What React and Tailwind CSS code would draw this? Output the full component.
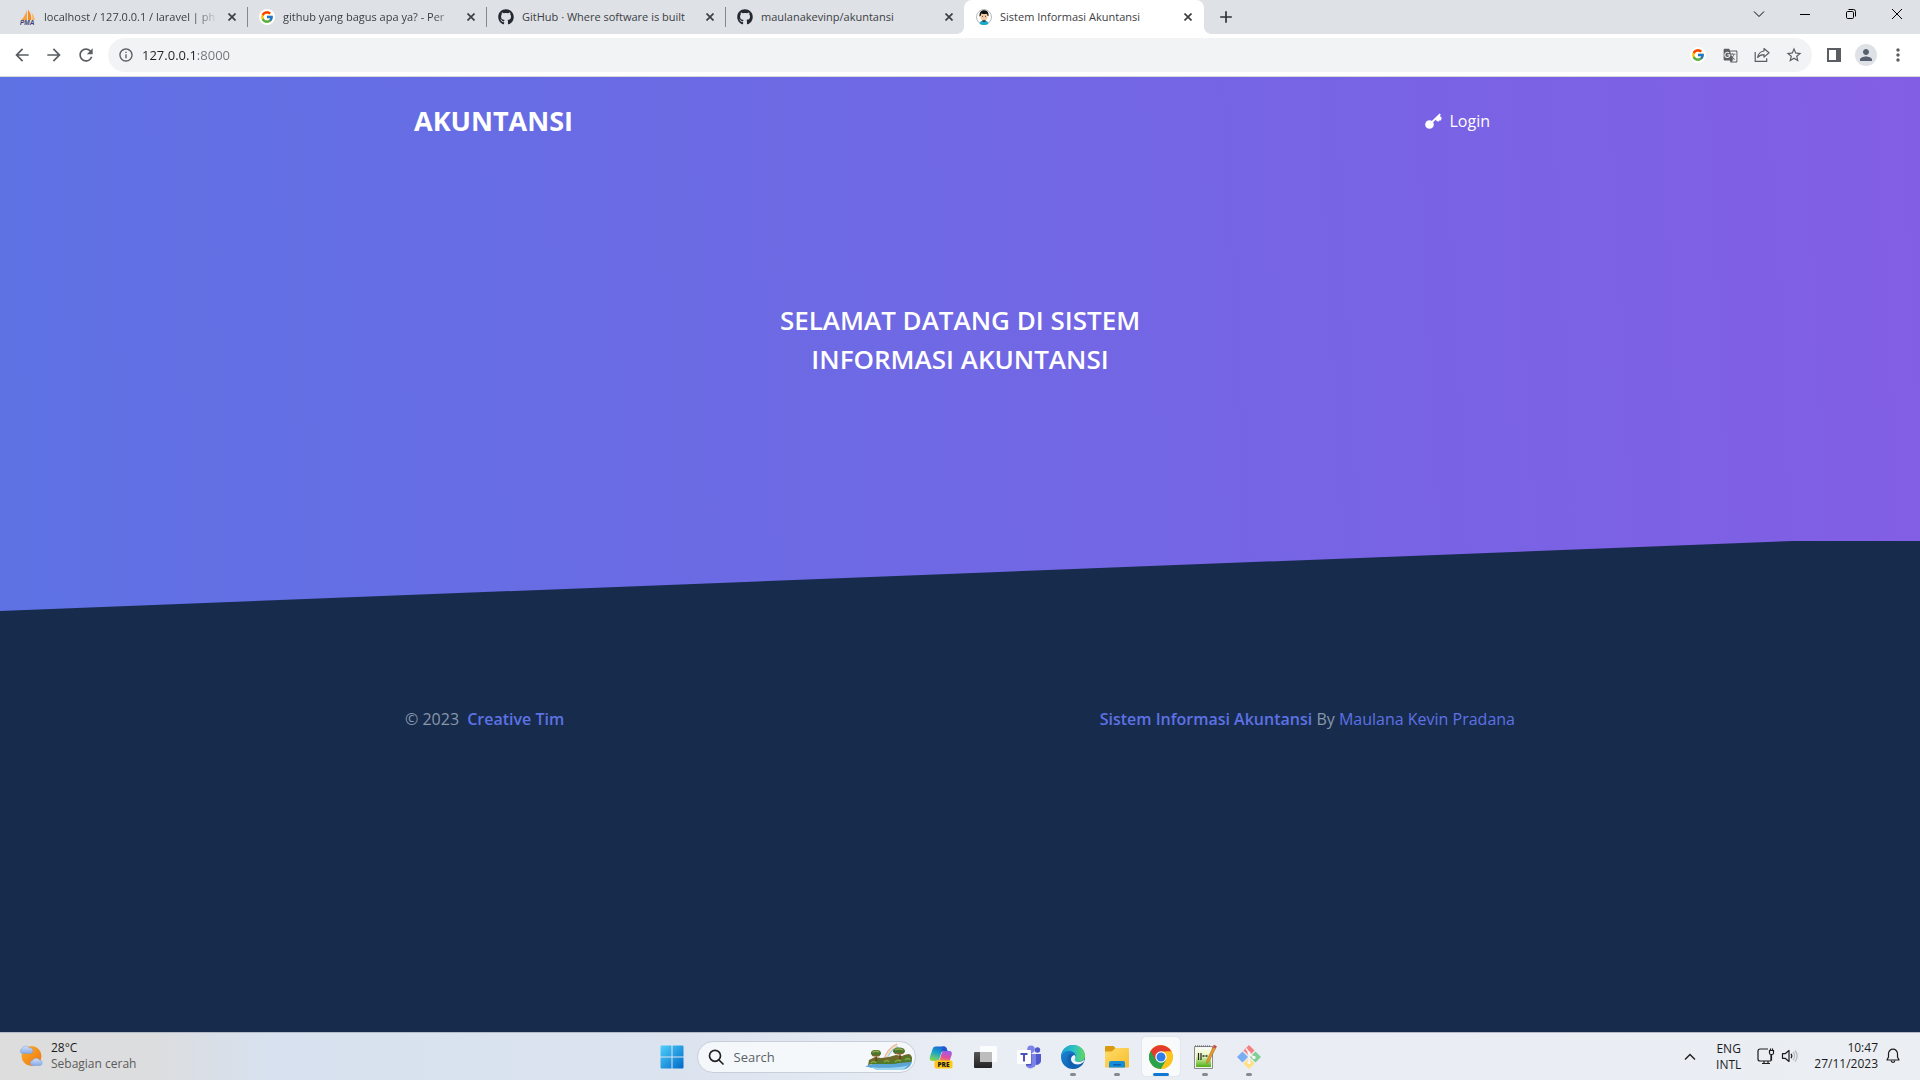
import React from "react";
import { FcGoogle } from "react-icons/fc";
import { FaGithub } from "react-icons/fa";
import {
  MdArrowBack,
  MdArrowForward,
  MdRefresh,
  MdInfoOutline,
  MdStarBorder,
  MdMoreVert,
  MdPerson,
  MdGTranslate,
  MdAdd,
} from "react-icons/md";

/* ---------- favicons ---------- */

function PmaIcon() {
  return (
    <svg viewBox="0 0 16 16" className="size-4">
      <path d="M7 1v10H1.2C3.8 8.500 5.800 5 7 1z" fill="#f7a13a" />
      <path d="M8 .5c2.600 3 3.400 7 3.200 10.500H8z" fill="#f58a1f" />
      <path d="M11.500 3.500c1.900 2.200 3 4.700 3.300 7.500h-2.600c.2-2.600 0-5-.7-7.500z" fill="#f9b562" />
      <text x="0" y="15.500" fontSize="6.500" fontWeight="900" fontStyle="italic" fill="#3d4173" fontFamily="Liberation Sans, sans-serif">PMA</text>
    </svg>
  );
}

function GoogleBadge() {
  return (
    <span className="flex size-4 items-center justify-center rounded-full bg-white">
      <FcGoogle className="size-[14px]" />
    </span>
  );
}

function PersonFavicon() {
  return (
    <svg viewBox="0 0 16 16" className="size-4">
      <circle cx="8" cy="8" r="7.500" fill="#fff" stroke="#a7a7a7" strokeWidth=".8" />
      <path d="M3.600 15c.2-2.400 1.800-3.500 4.400-3.500s4.200 1.100 4.400 3.500c-2.600 1.300-6.200 1.300-8.800 0z" fill="#1aa7c8" />
      <path d="M6.400 10.500h3.200v1.800L8 13l-1.600-.7z" fill="#1d2a33" />
      <path d="M4.500 5h7v3.200A3.200 3.200 0 0 1 8 11.300a3.200 3.200 0 0 1-3.500-3.100z" fill="#f3c9a0" />
      <path d="M3.500 7.500C3.200 3.500 4.800 1.200 8 1.200s5 2.100 4.500 6.100l-1-.6-.5-1.900c-2 .5-4.200.4-5.700-.4l-.8 2.500z" fill="#101010" />
      <circle cx="6.500" cy="7.300" r=".5" fill="#222" />
      <circle cx="9.500" cy="7.300" r=".5" fill="#222" />
    </svg>
  );
}

/* ---------- browser chrome ---------- */

function Github() {
  return <FaGithub className="size-4 text-[#24292f]" />;
}

const tabs = [
  { title: "localhost / 127.0.0.1 / laravel | ph", Icon: PmaIcon, line: true, fade: true },
  { title: "github yang bagus apa ya? - Per", Icon: GoogleBadge, line: true, fade: true },
  { title: "GitHub · Where software is built", Icon: Github, line: true },
  { title: "maulanakevinp/akuntansi", Icon: Github },
  { title: "Sistem Informasi Akuntansi", Icon: PersonFavicon, active: true },
];

function Tab({ title, Icon, line, active, fade }) {
  return (
    <div className={active ? "relative flex w-60 items-center rounded-t-lg bg-white pr-2 pl-3" : "relative flex w-[239px] items-center pr-[7px] pl-3"}>
      {active && (
        <>
          <span className="absolute bottom-0 -left-2 size-2 bg-[radial-gradient(circle_at_0_0,#dee1e6_8px,#fff_8px)]" />
          <span className="absolute -right-2 bottom-0 size-2 bg-[radial-gradient(circle_at_100%_0,#dee1e6_8px,#fff_8px)]" />
        </>
      )}
      <button role="tab" aria-selected={!!active} className="flex min-w-0 flex-1 items-center gap-2 text-left">
        <span className="shrink-0"><Icon /></span>
        <span className={fade ? "[mask-image:linear-gradient(90deg,#000_150px,transparent_174px)] text-[11px] leading-5 whitespace-nowrap text-[#3c4043]" : "text-[11px] leading-5 whitespace-nowrap text-[#3c4043]"}>{title}</span>
      </button>
      <button aria-label="Close tab" className="flex size-4 shrink-0 items-center justify-center text-[#3c4043]">
        <svg viewBox="0 0 8 8" className="size-2" stroke="currentColor" strokeWidth="1.700"><path d="M.5.5l7 7M7.500.5l-7 7" /></svg>
      </button>
      {line && <span className="absolute top-[7px] -right-px h-5 w-px bg-[#85888c]" />}
    </div>
  );
}

function TabStrip() {
  return (
    <header className="flex h-[34px] bg-[#dee1e6] pl-2">
      <div role="tablist" className="flex">
        {tabs.map((t) => <Tab key={t.title} {...t} />)}
      </div>
      <button aria-label="New tab" className="ml-3 flex w-5 items-center justify-center text-[#2f3235]">
        <MdAdd className="size-5" />
      </button>
      <div className="ml-auto flex h-7 text-black">
        <button aria-label="Search tabs" className="flex w-[46px] items-center justify-center">
          <svg viewBox="0 0 12 12" className="size-3" fill="none" stroke="currentColor"><path d="M1 3.500l5 5 5-5" /></svg>
        </button>
        <button aria-label="Minimize" className="flex w-[46px] items-center justify-center">
          <svg viewBox="0 0 10 10" className="size-[10px]" stroke="currentColor"><path d="M0 5.500h10" /></svg>
        </button>
        <button aria-label="Restore" className="flex w-[46px] items-center justify-center">
          <svg viewBox="0 0 10 10" className="size-[10px]" fill="none" stroke="currentColor">
            <rect x=".5" y="2.500" width="7" height="7" rx="1.200" />
            <path d="M2.500.5h5a2 2 0 0 1 2 2v5" />
          </svg>
        </button>
        <button aria-label="Close" className="flex w-[46px] items-center justify-center">
          <svg viewBox="0 0 10 10" className="size-[10px]" stroke="currentColor"><path d="M0 0l10 10M10 0L0 10" /></svg>
        </button>
      </div>
    </header>
  );
}

function ToolButton({ label, children }) {
  return <button aria-label={label} className="flex size-8 items-center justify-center">{children}</button>;
}

function Toolbar() {
  return (
    <div className="flex h-[43px] items-center border-b border-[#d5d7da] bg-white px-[6px] text-[#5a5d61]">
      <ToolButton label="Back"><MdArrowBack className="size-5" /></ToolButton>
      <ToolButton label="Forward"><MdArrowForward className="size-5" /></ToolButton>
      <ToolButton label="Reload"><MdRefresh className="size-5" /></ToolButton>
      <div className="ml-[6px] flex h-[34px] flex-1 items-center rounded-full bg-[#f1f3f4] pr-[2px] pl-[10px]">
        <MdInfoOutline className="size-4" />
        <input
          aria-label="Address"
          defaultValue="127.0.0.1:8000"
          className="ml-2 min-w-0 flex-1 bg-[linear-gradient(90deg,#202124_53px,#6f7478_53px)] bg-clip-text text-[13px] leading-5 text-transparent outline-none"
        />
        <ToolButton label="Search with Google">
          <span className="flex size-4 items-center justify-center rounded-full bg-white"><FcGoogle className="size-[14px]" /></span>
        </ToolButton>
        <ToolButton label="Translate"><MdGTranslate className="size-[15px]" /></ToolButton>
        <ToolButton label="Share">
          <svg viewBox="0 0 16 16" className="size-4" fill="none" stroke="currentColor" strokeWidth="1.200">
            <path d="M1.200 5v9.300h11.500v-3" />
            <path d="M10 1.500l5 4.300-5 4.300V7.700c-3 0-4.800.9-6.300 2.800.5-3.500 2.500-6 6.300-6.500z" strokeLinejoin="round" />
          </svg>
        </ToolButton>
        <ToolButton label="Bookmark"><MdStarBorder className="size-[18px]" /></ToolButton>
      </div>
      <div className="ml-[6px] flex">
        <ToolButton label="Side panel">
          <svg viewBox="0 0 14 14" className="size-[14px]"><path d="M0 0h14v14H0zM2 2v10h7V2z" fill="currentColor" fillRule="evenodd" /></svg>
        </ToolButton>
        <ToolButton label="Profile">
          <span className="flex size-[22px] items-center justify-center rounded-full bg-[#dee1e6] text-[#56606f]"><MdPerson className="size-[18px]" /></span>
        </ToolButton>
        <ToolButton label="Menu"><MdMoreVert className="size-5" /></ToolButton>
      </div>
    </div>
  );
}

/* ---------- web page ---------- */

function KeyIcon() {
  return (
    <svg viewBox="0 0 17 16" className="h-4 w-[17px]" fill="currentColor">
      <circle cx="4.500" cy="11.500" r="4.300" />
      <path d="M6 8.800L14.600.6l1.300 1.200-1 1 1.900 2.200-1 2.600-1.500-.2-.3 1-2-.2-1.300-1.500-3.500 3.600z" />
    </svg>
  );
}

function WebPage() {
  return (
    <main className="flex-1 bg-[#172b4d]">
      <section className="bg-[linear-gradient(87deg,#5e72e4_0%,#825ee4_100%)] text-white">
        <nav className="mx-auto flex h-[88px] max-w-[1140px] items-center justify-between pr-10 pl-6">
          <a href="#home" className="text-[27px] leading-10 font-bold">AKUNTANSI</a>
          <a href="#login" className="flex items-center gap-[7px] text-[16px] leading-6">
            <KeyIcon />
            Login
          </a>
        </nav>
        <h1 className="mx-auto max-w-[440px] pt-[136px] pb-[162px] text-center text-[26px] leading-[39px] font-semibold">
          SELAMAT DATANG DI SISTEM INFORMASI AKUNTANSI
        </h1>
        <svg viewBox="0 0 1920 70" preserveAspectRatio="none" className="block h-[70px] w-full">
          <path d="M0 70L1793 0H1920V70z" fill="#172b4d" />
        </svg>
      </section>
      <footer className="mx-auto flex max-w-[1140px] justify-between px-[15px] pt-24 text-[16px] leading-6 text-[#8898aa]">
        <p>© 2023 <a href="#creative" className="ml-1 font-semibold text-[#5e72e4]">Creative Tim</a></p>
        <p>
          <a href="#app" className="font-semibold text-[#5e72e4]">Sistem Informasi Akuntansi</a> By{" "}
          <a href="#author" className="text-[#5e72e4]">Maulana Kevin Pradana</a>
        </p>
      </footer>
    </main>
  );
}

/* ---------- taskbar ---------- */

function WeatherIcon() {
  return (
    <svg viewBox="0 0 24 24" className="size-6">
      <defs>
        <linearGradient id="sun" x1="0" y1="0" x2="1" y2="1"><stop offset="0" stopColor="#f8b32c" /><stop offset="1" stopColor="#f0700f" /></linearGradient>
        <linearGradient id="cloud" x1="0" y1="0" x2="0" y2="1"><stop offset="0" stopColor="#d3e2fa" /><stop offset="1" stopColor="#86a9e6" /></linearGradient>
      </defs>
      <circle cx="12.500" cy="12" r="10" fill="url(#sun)" />
      <path d="M2.800 9.500A2.500 2.500 0 0 1 3 4.800 4 4 0 0 1 10.300 4a2.800 2.800 0 0 1 1.500 5.500z" fill="url(#cloud)" stroke="#7d9edb" strokeWidth=".5" />
      <path d="M13 21.500a2.600 2.600 0 0 1 .4-5 4.300 4.300 0 0 1 7.300-.5 2.800 2.800 0 0 1 .4 5.500z" fill="url(#cloud)" stroke="#7d9edb" strokeWidth=".5" />
    </svg>
  );
}

function WindowsIcon() {
  return (
    <svg viewBox="0 0 24 24" className="size-6">
      <defs><linearGradient id="win" x1="0" y1="0" x2="1" y2="1"><stop offset="0" stopColor="#4fd0fb" /><stop offset="1" stopColor="#0069c8" /></linearGradient></defs>
      <path d="M1.500.5h10v11H.5v-10a1 1 0 0 1 1-1zM12.500.5h10a1 1 0 0 1 1 1v10h-11zM.5 12.500h11v11h-10a1 1 0 0 1-1-1zM12.500 12.500h11v10a1 1 0 0 1-1 1h-10z" fill="url(#win)" />
    </svg>
  );
}

function IslandArt() {
  return (
    <svg viewBox="0 0 50 28" className="h-7 w-[50px]">
      <path d="M20 17C22 9 26 4 33 1" fill="none" stroke="#f3a3a0" strokeWidth="1.200" />
      <path d="M21.200 17.500C23 10 27 5 33.500 2.300" fill="none" stroke="#f6e08a" strokeWidth="1.200" />
      <path d="M22.400 18C24 11 28 6.500 34 3.600" fill="none" stroke="#9dc9f2" strokeWidth="1.200" />
      <path d="M1 23.500c8-4 18-4 26-5s18-2 21-1c0 4-3 8-8 9H12c-3-2-7-2-11-3z" fill="#5aa6d6" />
      <path d="M7 24c8 1.500 27 1 37-1.500L39 27H13z" fill="#9ad4ee" />
      <path d="M4 22.500c5-3 10-3 14-3l11 1 18-1.500c2-3 1-7-2-8-3 0-5 1-7 2l-6-1-7 2-8 1-6-1-6 3z" fill="#6d6a2a" />
      <path d="M5 21c1-3 4-4 7-3 2-2 5-1 6 1 3-2 7-2 9 0 2-3 6-3 8-1 3-3 6-6 10-5 3 1 3 4 2 6-7-1-12 2-19 2s-15 0-23 0z" fill="#4f7a2c" />
      <path d="M7 20c2-2 4-2 5 0M20 19c2-2 4-2 5 0M31 19c2-2 4-2 6-1M41 17c2-2 4-2 5 0" stroke="#8aa53c" strokeWidth="1.500" fill="none" />
      <path d="M11 18l1.300-7 1 7zM35 16l.8-8 1.600 8z" fill="#70401e" />
      <path d="M12 7c4 0 5 1.500 5 3.500s-2 2.500-5 2.500-5-.5-5-2.500S8 7 12 7zM35 4.500c4 0 6 1.700 6 3.700S38 11 35 11s-6-.7-6-2.700 2-3.800 6-3.800z" fill="#4d742d" />
      <path d="M8.500 9.500c2-1.500 4.500-1.500 6.500-.5M31 7c2-1.500 6-1.500 8 0" stroke="#91a844" strokeWidth="1.500" fill="none" />
      <path d="M8 12.500c2 .8 6 .8 8 0M30.500 10.300c3 1 6 1 9 0" stroke="#9a5a24" fill="none" />
    </svg>
  );
}

function CopilotIcon() {
  return (
    <svg viewBox="0 0 24 24" className="size-6">
      <defs>
        <linearGradient id="cpa" x1="0.600" y1="0" x2="0.200" y2="1"><stop offset="0" stopColor="#1566d6" /><stop offset=".45" stopColor="#19a5c4" /><stop offset="1" stopColor="#8fd84a" /></linearGradient>
        <linearGradient id="cpb" x1="0.700" y1="0" x2="0.300" y2="1"><stop offset="0" stopColor="#9a5cf0" /><stop offset=".6" stopColor="#e0509a" /><stop offset="1" stopColor="#f58a4e" /></linearGradient>
      </defs>
      <path d="M7 1.500h8c1.600 0 2.400 1 2.800 2.400L18.500 6H15c-1.600 0-2.400.8-2.900 2.400l-1.700 5.400c-.5 1.500-1.400 2.200-3 2.200H3.200C1 16 .2 14.300.8 12.300L3.600 4C4.100 2.300 5.200 1.500 7 1.500z" fill="url(#cpa)" />
      <path d="M15 6h5.300c2.200 0 3 1.700 2.400 3.700L20.500 16h-12l2.300-1.500 1.800-6.100C13 6.900 13.600 6 15 6z" fill="url(#cpb)" />
      <path d="M13.200 1.500H15c1.600 0 2.400 1 2.800 2.400L18.500 6H15c-1.200 0-1.900.5-2.400 1.300z" fill="#2457cf" />
      <rect x="5.500" y="15.500" width="18" height="8" rx="1.800" fill="#ffc817" />
      <text x="14.500" y="21.800" textAnchor="middle" fontSize="6.500" fontWeight="800" fill="#1b1b1b" fontFamily="Open Sans, sans-serif">PRE</text>
    </svg>
  );
}

function TaskViewIcon() {
  return (
    <svg viewBox="0 0 24 24" className="size-6">
      <defs><linearGradient id="tv" x1="0" y1="0" x2="0" y2="1"><stop offset="0" stopColor="#555" /><stop offset="1" stopColor="#222" /></linearGradient></defs>
      <rect x="1" y="7" width="18" height="16" rx="1" fill="url(#tv)" />
      <rect x="7" y="1" width="17" height="16" rx="1" fill="#fff" fillOpacity=".82" />
      <path d="M7 7h12v10H7z" fill="#bdbdbd" />
    </svg>
  );
}

function TeamsIcon() {
  return (
    <svg viewBox="0 0 24 24" className="size-6">
      <circle cx="20.500" cy="5" r="2.700" fill="#5059c9" />
      <path d="M17 9h7v7a4 4 0 0 1-7 2.500z" fill="#5059c9" />
      <circle cx="14" cy="4.300" r="3.800" fill="#7b83eb" />
      <path d="M9 9h10v9a5.500 5.500 0 0 1-10 3z" fill="#7b83eb" />
      <path d="M9 7h5.500v13.500H9z" fill="#343a8f" opacity=".6" />
      <rect x="0" y="5" width="14" height="14" rx="1" fill="#fdfdff" />
      <path d="M3.500 8h7v2H8v6.500H6V10H3.500z" fill="#4a53bc" />
    </svg>
  );
}

function EdgeIcon() {
  return (
    <svg viewBox="0 0 24 24" className="size-6">
      <defs>
        <linearGradient id="eg1" x1="0" y1=".3" x2="1" y2=".3"><stop offset="0" stopColor="#1a9fd8" /><stop offset=".55" stopColor="#2cc3c2" /><stop offset="1" stopColor="#63d957" /></linearGradient>
        <linearGradient id="eg2" x1="0" y1="0" x2="1" y2="1"><stop offset="0" stopColor="#1b8ede" /><stop offset="1" stopColor="#0b4c9c" /></linearGradient>
      </defs>
      <circle cx="12" cy="12" r="12" fill="url(#eg2)" />
      <path d="M.1 11C.7 4.800 5.800 0 12 0c6.800 0 12 4.900 12 10.800 0 3.700-2.700 6-6 6-3.600 0-4.800-1.400-4.500-2.400.4-1 1.200-1.500 1.200-3.200 0-2.700-2.600-5.200-6.600-5.200C4.300 6 1.200 8 .1 11z" fill="url(#eg1)" />
      <path d="M13.800 14.200c-.7 1.200.7 2.700 4.200 2.700 2.100 0 3.800-.8 4.900-2.200.4.500.2 1.300-.1 1.900-1.400 1.800-4 3.200-6.800 3.200-4.200 0-6-3-6-5.400 0-2.200 1.300-3.900 3.200-4.300 1 .7 1.500 1.600 1.200 2.800z" fill="#eef4fa" />
      <path d="M7.500 9.800c-2.200 3.700-.5 10.700 4.800 13.700 4 .3 7.800-1.700 9.800-4.900-5.500 2.500-11.400.5-12.300-4.100-.3-2 .8-3.800 2.900-4.800-1.500-.8-3.800-.9-5.200.1z" fill="#1262b3" />
    </svg>
  );
}

function ExplorerIcon() {
  return (
    <svg viewBox="0 0 24 24" className="size-6">
      <defs><linearGradient id="ex" x1="0" y1="0" x2="1" y2="1"><stop offset="0" stopColor="#ffdc6b" /><stop offset="1" stopColor="#f8bd2c" /></linearGradient></defs>
      <path d="M1 1h7.500l2.500 2.500V7H0V2a1 1 0 0 1 1-1z" fill="#d99a12" />
      <path d="M8 5.500L10.500 3H23a1 1 0 0 1 1 1v17.500a1 1 0 0 1-1 1H1a1 1 0 0 1-1-1v-15h6.500z" fill="url(#ex)" />
      <path d="M4 22.500V18a2 2 0 0 1 2-2h12a2 2 0 0 1 2 2v4.500z" fill="#178dd8" />
      <rect x="8" y="19" width="8" height="1.500" rx=".7" fill="#0a5ea8" />
    </svg>
  );
}

function ChromeIcon() {
  return (
    <svg viewBox="0 0 24 24" className="size-6">
      <circle cx="12" cy="12" r="12" fill="#fbc31b" />
      <path d="M12 12L1.600 6A12 12 0 0 0 12 24l5.200-9z" fill="#2ba24c" />
      <path d="M1.600 6A12 12 0 0 1 22.400 6.500H12v5.500L6.800 15z" fill="#e33b2e" />
      <path d="M22.400 6.500A12 12 0 0 1 12 24l5.200-9 0-8.500z" fill="#fbc31b" />
      <circle cx="12" cy="12" r="5.700" fill="#fff" />
      <circle cx="12" cy="12" r="4.500" fill="#2f7de9" />
    </svg>
  );
}

function NotepadIcon() {
  return (
    <svg viewBox="0 0 24 24" className="size-6">
      <defs><linearGradient id="np" x1="0" y1="0" x2="0" y2="1"><stop offset="0" stopColor="#fafcf3" /><stop offset=".45" stopColor="#e3f5b5" /><stop offset="1" stopColor="#4fae14" /></linearGradient></defs>
      <path d="M1.500 1.500h18v22h-18z" fill="#f4f4f4" stroke="#8a8a8a" />
      <path d="M3 3h15v19H3z" fill="url(#np)" />
      <path d="M2 1h15" stroke="#555" strokeWidth="1.200" strokeDasharray="1 1" />
      <path d="M5.500 8v7M8 8v7" stroke="#222" strokeWidth="1.200" />
      <path d="M9.500 11h2M12.500 11h2" stroke="#222" strokeWidth="1.500" />
      <path d="M21 0l2.500 1.500-7.500 15-2.500 2 .5-3.500z" fill="#e9992c" stroke="#9a6420" strokeWidth=".5" />
      <path d="M21 0l2.500 1.500-1 2-2.300-1.300z" fill="#c6475b" />
    </svg>
  );
}

function GitIcon() {
  return (
    <svg viewBox="0 0 24 24" className="size-6">
      <path d="M12 0l5.500 5.500L12 11 6.500 5.500z" fill="#f58080" />
      <path d="M5.500 6.500L11 12l-5.500 5.500L0 12z" fill="#79aef0" />
      <path d="M18.500 6.500L24 12l-5.500 5.500L13 12z" fill="#80cf94" />
      <path d="M12 13l5.500 5.500L12 24l-5.500-5.500z" fill="#ffe07c" />
      <path d="M9 3.500l3 4v10M12 8l4.500 4.500" stroke="#f3f4f6" strokeWidth="1.600" fill="none" />
      <circle cx="12" cy="7.800" r="1.600" fill="#f3f4f6" />
      <circle cx="12" cy="17.500" r="1.700" fill="#f3f4f6" />
      <circle cx="17" cy="12.500" r="1.700" fill="#f3f4f6" />
    </svg>
  );
}

const apps = [
  { name: "Copilot", Icon: CopilotIcon },
  { name: "Task view", Icon: TaskViewIcon },
  { name: "Teams", Icon: TeamsIcon },
  { name: "Edge", Icon: EdgeIcon, running: true },
  { name: "File Explorer", Icon: ExplorerIcon, running: true },
  { name: "Chrome", Icon: ChromeIcon, focused: true },
  { name: "Notepad++", Icon: NotepadIcon, running: true },
  { name: "Git", Icon: GitIcon, running: true },
];

function AppButton({ name, Icon, running, focused }) {
  return (
    <button
      aria-label={name}
      className={
        focused
          ? "relative mx-[3px] flex h-[39px] w-[38px] items-center justify-center rounded bg-white/70 shadow-[0_0_1px_rgba(0,0,0,0.25)]"
          : "relative mx-[3px] flex h-[39px] w-[38px] items-center justify-center rounded"
      }
    >
      <Icon />
      {running && <span className="absolute bottom-0 left-4 h-[3px] w-[6px] rounded-full bg-[#868a8f]" />}
      {focused && <span className="absolute bottom-0 left-[11px] h-[3px] w-4 rounded-full bg-[#0f78d4]" />}
    </button>
  );
}

function Taskbar() {
  return (
    <footer className="grid h-12 grid-cols-[1fr_auto_1fr] items-center border-t border-[#b4bac6] bg-[linear-gradient(90deg,#dddddd_0%,#dcdddf_8%,#d7e1ef_14%,#dbe3ef_35%,#e9edf4_50%,#ebeef3_100%)] text-[#1c1c1c]">
      <button className="flex items-center gap-2 pb-px pl-[19px] text-left text-[12px] leading-4">
        <WeatherIcon />
        <span>
          <span className="block">28°C</span>
          <span className="block text-[#5b5b5b]">Sebagian cerah</span>
        </span>
      </button>
      <div className="flex items-center">
        <button aria-label="Start" className="flex w-11 justify-center"><WindowsIcon /></button>
        <label className="mx-[3px] flex h-8 w-[219px] items-center rounded-full border border-[#c9ced8] bg-[#f5f8fb] pr-px pl-[10px]">
          <svg viewBox="0 0 16 16" className="size-4 shrink-0" fill="none" stroke="#222" strokeWidth="1.700">
            <circle cx="7" cy="6.800" r="5.500" />
            <path d="M11 11l4 4" strokeLinecap="round" />
          </svg>
          <input aria-label="Search" placeholder="Search" className="ml-[10px] w-28 min-w-0 flex-1 text-[13px] leading-5 outline-none placeholder:text-[#5c6066]" />
          <IslandArt />
        </label>
        {apps.map((a) => <AppButton key={a.name} {...a} />)}
      </div>
      <div className="flex items-center justify-end pr-5 text-[12px] leading-4">
        <button aria-label="Hidden icons" className="mr-4 p-1">
          <svg viewBox="0 0 12 12" className="size-3" fill="none" stroke="currentColor" strokeWidth="1.400"><path d="M1 8.500l5-5 5 5" /></svg>
        </button>
        <button className="mr-4 text-center">
          <span className="block">ENG</span>
          <span className="block">INTL</span>
        </button>
        <button aria-label="Network and volume" className="mr-[15px] flex gap-[6px] pb-px">
          <svg viewBox="0 0 18 18" className="size-[18px]" fill="none" stroke="currentColor" strokeWidth="1.200">
            <path d="M11 2H3a2 2 0 0 0-2 2v8a2 2 0 0 0 2 2h10a1 1 0 0 0 1-1V8M5 16.500h8M7 14v2M11 14v2" />
            <path d="M12.500 3.500h4V6a1.500 1.500 0 0 1-1.500 1.500h-1A1.500 1.500 0 0 1 12.500 6zM13.500 3.500V1.500M15.500 3.500V1.500M14.500 7.500v6" />
          </svg>
          <svg viewBox="0 0 18 18" className="size-[18px]" fill="none" stroke="currentColor" strokeWidth="1.200">
            <path d="M1.500 6.700h2.600l3.900-3.200v11l-3.900-3.200H1.500z" strokeLinejoin="round" />
            <path d="M10 6.800c1 1.300 1 3.100 0 4.400" />
            <path d="M12 5c2 2.300 2 5.700 0 8M14 3.500c2.800 3 2.800 8 0 11" stroke="#b5b8bc" />
          </svg>
        </button>
        <button className="flex items-center gap-2 pb-px text-right">
          <span>
            <span className="block">10:47</span>
            <span className="block">27/11/2023</span>
          </span>
          <svg viewBox="0 0 14 16" className="h-4 w-[14px]" fill="none" stroke="currentColor" strokeWidth="1.200">
            <path d="M7 1.200A4.500 4.500 0 0 0 2.500 5.700V9L1 12h12l-1.500-3V5.700A4.500 4.500 0 0 0 7 1.200z" strokeLinejoin="round" />
            <path d="M5.200 12.500a1.800 1.800 0 0 0 3.600 0" />
          </svg>
        </button>
      </div>
    </footer>
  );
}

export default function App() {
  return (
    <div className="flex min-h-screen flex-col overflow-hidden font-['Open_Sans',sans-serif]">
      <TabStrip />
      <Toolbar />
      <WebPage />
      <Taskbar />
    </div>
  );
}
